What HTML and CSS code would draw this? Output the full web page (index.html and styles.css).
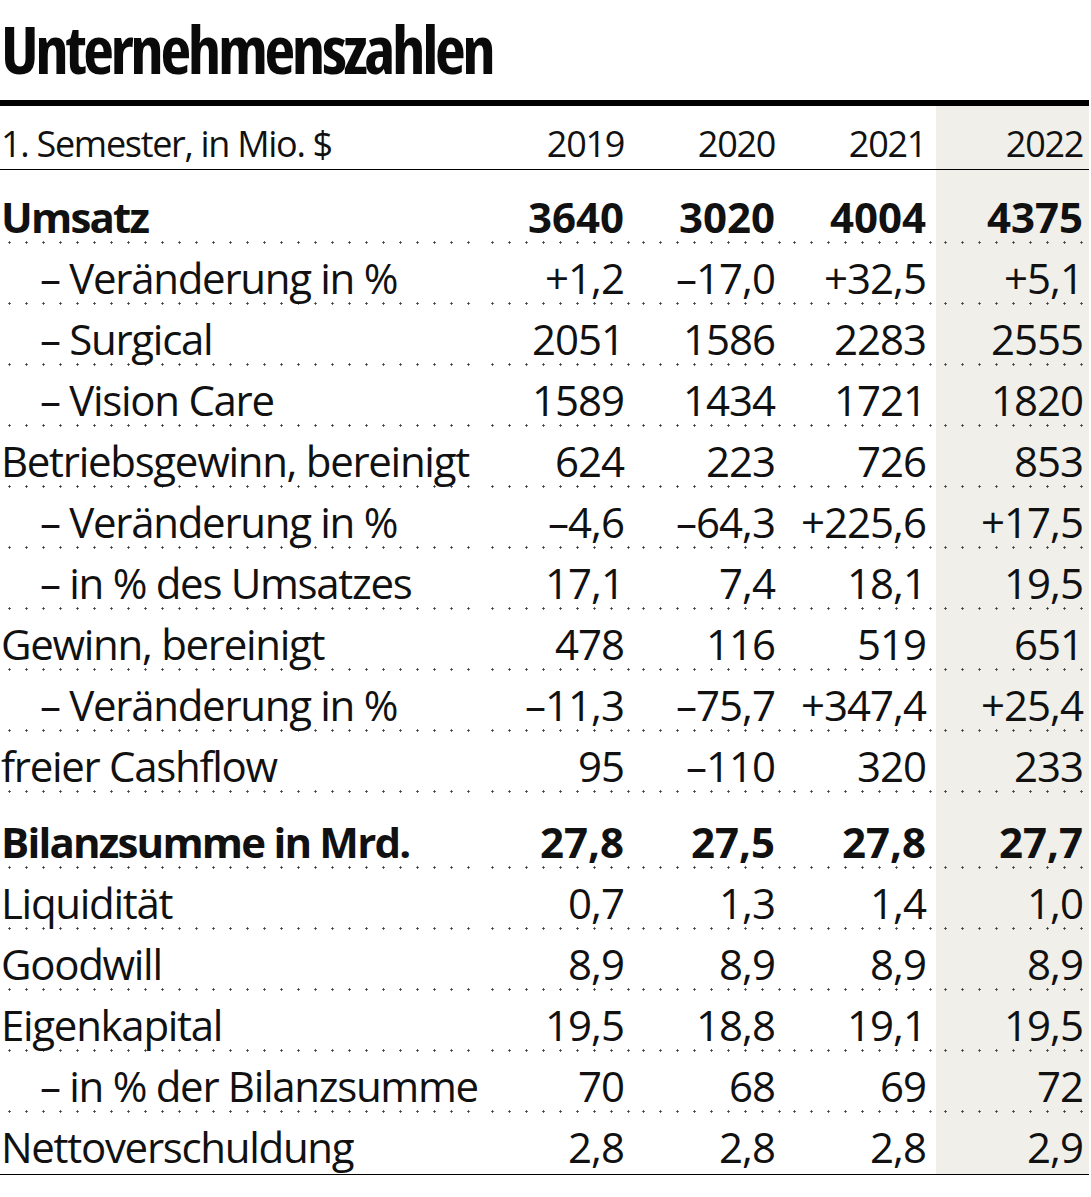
FILE: index.html
```html
<!DOCTYPE html>
<html lang="de">
<head>
<meta charset="utf-8">
<title>Unternehmenszahlen</title>
<link rel="stylesheet" href="styles.css">
</head>
<body>
<div class="card">
  <h1 class="title"><span class="title-text">Unternehmenszahlen</span></h1>
  <div class="table">
    <div class="row head">
      <div class="cell label">1. Semester, in Mio. $</div>
      <div class="cell num">2019</div>
      <div class="cell num">2020</div>
      <div class="cell num c3">2021</div>
      <div class="cell num hl">2022</div>
    </div>
    <div class="row bold first">
      <div class="cell label">Umsatz</div>
      <div class="cell num">3640</div>
      <div class="cell num">3020</div>
      <div class="cell num c3">4004</div>
      <div class="cell num hl">4375</div>
    </div>
    <div class="row">
      <div class="cell label sub">– Veränderung in %</div>
      <div class="cell num">+1,2</div>
      <div class="cell num">–17,0</div>
      <div class="cell num c3">+32,5</div>
      <div class="cell num hl">+5,1</div>
    </div>
    <div class="row">
      <div class="cell label sub">– Surgical</div>
      <div class="cell num">2051</div>
      <div class="cell num">1586</div>
      <div class="cell num c3">2283</div>
      <div class="cell num hl">2555</div>
    </div>
    <div class="row">
      <div class="cell label sub">– Vision Care</div>
      <div class="cell num">1589</div>
      <div class="cell num">1434</div>
      <div class="cell num c3">1721</div>
      <div class="cell num hl">1820</div>
    </div>
    <div class="row">
      <div class="cell label">Betriebsgewinn, bereinigt</div>
      <div class="cell num">624</div>
      <div class="cell num">223</div>
      <div class="cell num c3">726</div>
      <div class="cell num hl">853</div>
    </div>
    <div class="row">
      <div class="cell label sub">– Veränderung in %</div>
      <div class="cell num">–4,6</div>
      <div class="cell num">–64,3</div>
      <div class="cell num c3">+225,6</div>
      <div class="cell num hl">+17,5</div>
    </div>
    <div class="row">
      <div class="cell label sub">– in % des Umsatzes</div>
      <div class="cell num">17,1</div>
      <div class="cell num">7,4</div>
      <div class="cell num c3">18,1</div>
      <div class="cell num hl">19,5</div>
    </div>
    <div class="row">
      <div class="cell label">Gewinn, bereinigt</div>
      <div class="cell num">478</div>
      <div class="cell num">116</div>
      <div class="cell num c3">519</div>
      <div class="cell num hl">651</div>
    </div>
    <div class="row">
      <div class="cell label sub">– Veränderung in %</div>
      <div class="cell num">–11,3</div>
      <div class="cell num">–75,7</div>
      <div class="cell num c3">+347,4</div>
      <div class="cell num hl">+25,4</div>
    </div>
    <div class="row">
      <div class="cell label">freier Cashflow</div>
      <div class="cell num">95</div>
      <div class="cell num">–110</div>
      <div class="cell num c3">320</div>
      <div class="cell num hl">233</div>
    </div>
    <div class="row bold section">
      <div class="cell label">Bilanzsumme in Mrd.</div>
      <div class="cell num">27,8</div>
      <div class="cell num">27,5</div>
      <div class="cell num c3">27,8</div>
      <div class="cell num hl">27,7</div>
    </div>
    <div class="row">
      <div class="cell label">Liquidität</div>
      <div class="cell num">0,7</div>
      <div class="cell num">1,3</div>
      <div class="cell num c3">1,4</div>
      <div class="cell num hl">1,0</div>
    </div>
    <div class="row">
      <div class="cell label">Goodwill</div>
      <div class="cell num">8,9</div>
      <div class="cell num">8,9</div>
      <div class="cell num c3">8,9</div>
      <div class="cell num hl">8,9</div>
    </div>
    <div class="row">
      <div class="cell label">Eigenkapital</div>
      <div class="cell num">19,5</div>
      <div class="cell num">18,8</div>
      <div class="cell num c3">19,1</div>
      <div class="cell num hl">19,5</div>
    </div>
    <div class="row">
      <div class="cell label sub">– in % der Bilanzsumme</div>
      <div class="cell num">70</div>
      <div class="cell num">68</div>
      <div class="cell num c3">69</div>
      <div class="cell num hl">72</div>
    </div>
    <div class="row last">
      <div class="cell label">Nettoverschuldung</div>
      <div class="cell num">2,8</div>
      <div class="cell num">2,8</div>
      <div class="cell num c3">2,8</div>
      <div class="cell num hl">2,9</div>
    </div>
  </div>
</div>
</body>
</html>
```

FILE: styles.css
```css
html, body {
  margin: 0;
  padding: 0;
  background: #ffffff;
}

body {
  font-family: "Open Sans", "Noto Sans", sans-serif;
  color: #111111;
}

.card {
  width: 1089px;
}

.title {
  margin: 0;
  height: 100px;
  font-family: "Open Sans", sans-serif;
  font-weight: 700;
  font-stretch: 75%;
  font-size: 67px;
  letter-spacing: -3.4px;
  line-height: 96px;
  padding-left: 1px;
  color: #0a0a0a;
}

.title-text {
  display: inline-block;
}

.table {
  border-top: 6px solid #000000;
  border-bottom: 1.5px solid #000000;
}

.row {
  display: grid;
  grid-template-columns: 1fr 151px 151px 151px 153px;
  font-size: 42px;
}

.cell {
  padding-top: 6px;
  line-height: 55px;
  white-space: nowrap;
  background-image: radial-gradient(circle, #3a3a3a 0 0.9px, transparent 1.3px);
  background-size: 17px 3px;
  background-repeat: repeat-x;
  background-position: 1px 100%;
}

.label {
  padding-left: 1px;
  letter-spacing: -1.3px;
}

.label.sub {
  padding-left: 40px;
}

.num {
  text-align: right;
  padding-right: 10px;
  letter-spacing: -1px;
}

.num.hl {
  background-color: #f0efea;
  padding-right: 6px;
}

.row.head {
  font-size: 36px;
  border-bottom: 1.5px solid #000000;
}

.row.head .cell {
  padding-top: 12px;
  line-height: 51px;
  letter-spacing: -1.3px;
  background-image: none;
}

.row.bold {
  font-weight: 700;
}

.row.bold .label {
  letter-spacing: -1.8px;
}

.row.bold .num {
  letter-spacing: 0;
}

.row.first .cell {
  padding-top: 19px;
}

.row.section .cell {
  padding-top: 21px;
}

.row.last .cell {
  background-image: none;
}
```
